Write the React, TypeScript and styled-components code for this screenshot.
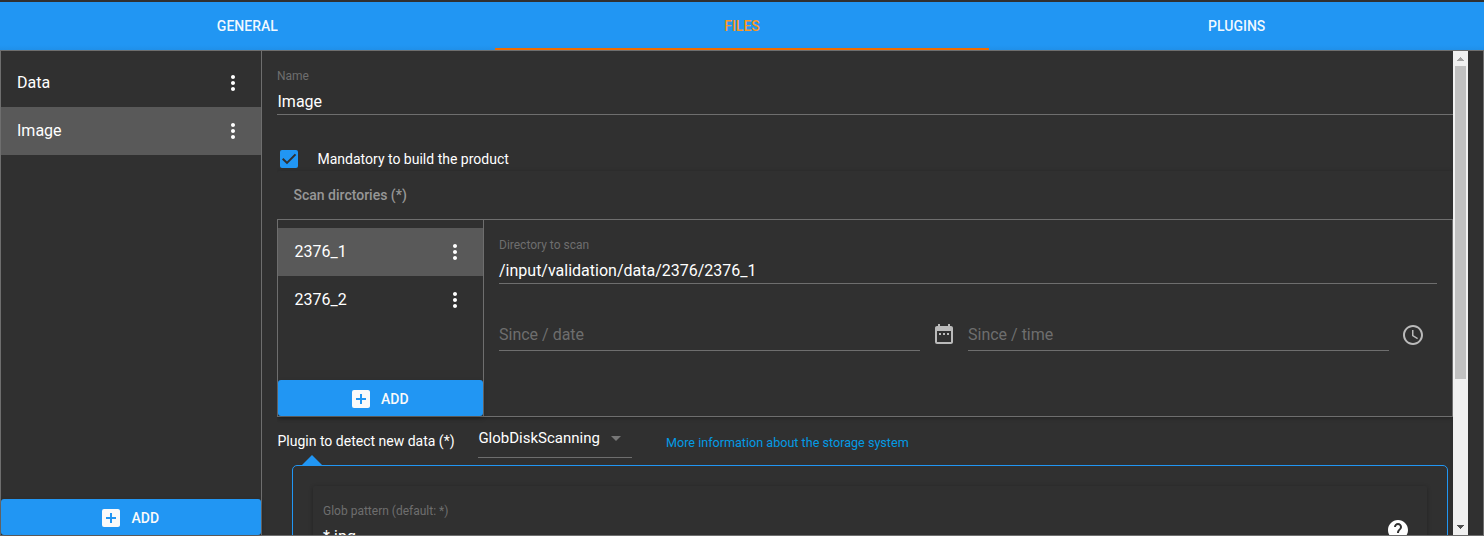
import React from 'react';
import styled, { createGlobalStyle } from 'styled-components';
import { MdMoreVert, MdAddBox, MdDateRange, MdAccessTime, MdHelp } from 'react-icons/md';

const blue = '#2196f3';
const line = '#6e6e6e';

const GlobalStyle = createGlobalStyle`
  *, *::before, *::after { box-sizing: border-box; }
  body {
    margin: 0;
    background: #303030;
    color: #fff;
    font-family: Roboto, sans-serif;
    font-size: 14px;
    overflow: hidden;
  }
  svg { display: block; }
`;

const Page = styled.div`
  display: flex;
  flex-direction: column;
  height: 536px;
  padding-top: 2px;
`;

const Tabs = styled.nav`
  display: flex;
  flex: none;
  height: 48px;
  background: linear-gradient(${blue} 43px, #2090e9 48px);
`;

const Tab = styled.div<{ $active?: boolean }>`
  flex: 1;
  display: flex;
  align-items: center;
  justify-content: center;
  font-weight: 500;
  color: ${p => (p.$active ? '#ff9820' : 'rgba(255,255,255,0.95)')};
  box-shadow: ${p => (p.$active ? 'inset 0 -2px #ef6c00' : 'none')};
`;

const Frame = styled.main`
  flex: 1;
  min-height: 0;
  display: flex;
  border: 1px solid ${line};
`;

const ListPane = styled.aside<{ $width: number }>`
  display: flex;
  flex-direction: column;
  flex: none;
  width: ${p => p.$width}px;
  padding-top: 8px;
  border-right: 1px solid ${line};
`;

const ListItem = styled.div<{ $selected?: boolean }>`
  display: flex;
  align-items: center;
  justify-content: space-between;
  height: 48px;
  padding: 0 16px;
  font-size: 16px;
  background: ${p => (p.$selected ? '#595959' : 'transparent')};
`;

const ItemName = styled.span<{ $inset: number }>`
  padding: 0 0 2px ${p => p.$inset}px;
`;

const AddButton = styled.button`
  display: flex;
  align-items: center;
  justify-content: center;
  gap: 8px;
  height: 36px;
  margin-top: auto;
  padding: 2px 3.5px 0 0;
  border: 0;
  border-radius: 3px;
  background: ${blue};
  color: #fafafa;
  font: 500 14px Roboto, sans-serif;
  box-shadow: 0 2px 5px rgba(0, 0, 0, 0.26);
`;

const Scroller = styled.section`
  display: flex;
  flex: 1;
  min-width: 0;
  margin: 0 15px;
  overflow: hidden;
`;

const Content = styled.div`
  flex: 1;
  min-width: 0;
  display: flex;
  flex-direction: column;
`;

const Field = styled.label<{ $height: number }>`
  display: flex;
  flex-direction: column;
  justify-content: flex-end;
  flex: none;
  height: ${p => p.$height}px;
  border-bottom: 1px solid ${line};
`;

const FieldLabel = styled.span`
  font-size: 12px;
  line-height: 16px;
  color: #6e6e6e;
`;

const FieldValue = styled.span<{ $placeholder?: boolean }>`
  padding-top: ${p => (p.$placeholder ? 0 : 6)}px;
  font-size: 16px;
  line-height: ${p => (p.$placeholder ? 30 : 24)}px;
  color: ${p => (p.$placeholder ? '#6e6e6e' : '#fff')};
`;

const NameValue = styled(FieldValue)`
  padding-left: 0.5px;
`;

const CheckRow = styled.div`
  display: flex;
  align-items: center;
  gap: 19.5px;
  height: 18px;
  margin: 35px 0 3px 3px;
`;

const CheckBox = styled.span`
  width: 18px;
  height: 18px;
  border-radius: 2px;
  background: ${blue};
`;

const Card = styled.div`
  flex: none;
  border-radius: 2px;
  box-shadow: 0 1px 4px rgba(0, 0, 0, 0.28);
`;

const CardTitle = styled.div`
  display: flex;
  align-items: center;
  height: 48px;
  padding-left: 16.5px;
  font-weight: 500;
  color: #979797;
`;

const SplitBox = styled.div`
  display: flex;
  height: 198px;
  border: 1px solid ${line};
`;

const Detail = styled.div`
  flex: 1;
  padding: 0 15px;
`;

const DateRow = styled.div`
  display: flex;
  padding-top: 31px;
`;

const Picker = styled.div`
  display: flex;
  flex: 1;
  color: #bababa;

  ${Field} { flex: 1; }
`;

const IconSlot = styled.span<{ $top: number }>`
  display: flex;
  width: 48px;
  padding: ${p => p.$top}px 0 0 12px;
`;

const PluginRow = styled.div`
  display: flex;
  flex: none;
  height: 48px;
`;

const PluginLabel = styled.span`
  width: 201px;
  padding-left: 0.5px;
  line-height: 49px;
`;

const Select = styled.div`
  display: flex;
  align-items: center;
  justify-content: space-between;
  width: 154px;
  height: 41px;
  padding: 2px 11px 0 0.4px;
  border-bottom: 1px solid ${line};
  font-size: 15px;
`;

const Caret = styled.span`
  border: 5px solid transparent;
  border-top-color: #777;
  border-bottom: 0;
`;

const Link = styled.a`
  margin-left: 34px;
  font-size: 12.6px;
  line-height: 52px;
  color: #039be5;
`;

const Options = styled.div`
  position: relative;
  flex: none;
  height: 140px;
  margin: 0 5px 0 15px;
  padding: 20px;
  border: 1px solid ${blue};
  border-radius: 5px;

  &::before {
    content: '';
    position: absolute;
    left: 9px;
    top: -11px;
    border: 10px solid transparent;
    border-top: 0;
    border-bottom-color: ${blue};
  }
`;

const OptionCard = styled(Card)`
  display: flex;
  justify-content: space-between;
  height: 100px;
  padding: 17px 17px 0 10px;
`;

const Stack = styled.div`
  display: flex;
  flex-direction: column;
`;

const HelpSlot = styled.span`
  padding-top: 15px;
`;

const ScrollBar = styled.div`
  display: flex;
  flex-direction: column;
  align-items: center;
  flex: none;
  width: 15px;
  background: #f1f1f1;
`;

const Thumb = styled.div`
  width: 11px;
  height: 313px;
  margin-bottom: auto;
  background: #c1c1c1;
`;

const Arrow = ({ down }: { down?: boolean }) => (
  <svg width="15" height="15" shapeRendering="crispEdges">
    <path d={down ? 'M4 5h7v1h-1v1h-1v1h-1v1h-1v-1h-1v-1h-1v-1h-1z' : 'M4 10h7v-1h-1v-1h-1v-1h-1v-1h-1v1h-1v1h-1v1h-1z'} fill={down ? '#505050' : '#a3a3a3'} />
  </svg>
);

type ListProps = { width: number; items: string[]; selected: string; inset?: number };

const List = ({ width, items, selected, inset = 0 }: ListProps) => (
  <ListPane $width={width}>
    {items.map(item => (
      <ListItem key={item} $selected={item === selected}>
        <ItemName $inset={inset}>{item}</ItemName>
        <MdMoreVert size={24} />
      </ListItem>
    ))}
    <AddButton><MdAddBox size={24} />ADD</AddButton>
  </ListPane>
);

export default function App() {
  return (
    <>
      <GlobalStyle />
      <Page>
        <Tabs>
          <Tab>GENERAL</Tab>
          <Tab $active>FILES</Tab>
          <Tab>PLUGINS</Tab>
        </Tabs>
        <Frame>
          <List width={261} items={['Data', 'Image']} selected="Image" />
          <Scroller>
            <Content>
              <Field $height={64}>
                <FieldLabel>Name</FieldLabel>
                <NameValue>Image</NameValue>
              </Field>
              <CheckRow>
                <CheckBox>
                  <svg width="18" height="18" viewBox="0 0 18 18">
                    <path d="M2.7 8.7l4.3 4.2 8.5-8.5" fill="none" stroke="#303030" strokeWidth="2" />
                  </svg>
                </CheckBox>
                Mandatory to build the product
              </CheckRow>
              <Card>
                <CardTitle>Scan dirctories (*)</CardTitle>
                <SplitBox>
                  <List width={206} items={['2376_1', '2376_2']} selected="2376_1" inset={0.5} />
                  <Detail>
                    <Field $height={64}>
                      <FieldLabel>Directory to scan</FieldLabel>
                      <FieldValue>/input/validation/data/2376/2376_1</FieldValue>
                    </Field>
                    <DateRow>
                      <Picker>
                        <Field $height={36}><FieldValue $placeholder>Since / date</FieldValue></Field>
                        <IconSlot $top={7}><MdDateRange size={24} /></IconSlot>
                      </Picker>
                      <Picker>
                        <Field $height={36}><FieldValue $placeholder>Since / time</FieldValue></Field>
                        <IconSlot $top={8}><MdAccessTime size={24} /></IconSlot>
                      </Picker>
                    </DateRow>
                  </Detail>
                </SplitBox>
              </Card>
              <PluginRow>
                <PluginLabel>Plugin to detect new data (*)</PluginLabel>
                <Select>GlobDiskScanning<Caret /></Select>
                <Link>More information about the storage system</Link>
              </PluginRow>
              <Options>
                <OptionCard>
                  <Stack>
                    <FieldLabel>Glob pattern (default: *)</FieldLabel>
                    <FieldValue>*.jpg</FieldValue>
                  </Stack>
                  <HelpSlot><MdHelp size={24} /></HelpSlot>
                </OptionCard>
              </Options>
            </Content>
            <ScrollBar>
              <Arrow />
              <Thumb />
              <Arrow down />
            </ScrollBar>
          </Scroller>
        </Frame>
      </Page>
    </>
  );
}
